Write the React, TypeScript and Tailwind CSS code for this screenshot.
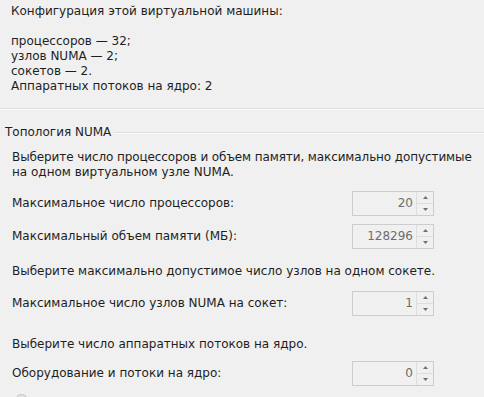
import React from "react";

type SpinProps = { value: string };

const SpinBox: React.FC<SpinProps> = ({ value }) => {
  return (
    <div className="flex h-[25px] w-[82px] border border-[#cdcdcd] bg-[#f0f0f0]">
      <div className="flex flex-1 items-center justify-end pr-[3px] text-[#6d6d6d]">
        {value}
      </div>
      <div className="flex w-[17px] flex-col border-l border-[#dedede]">
        <div className="flex flex-1 items-center justify-center border-b border-[#dedede]">
          <svg width="5" height="3" viewBox="0 0 5 3">
            <path d="M2.5 0 L5 3 L0 3 Z" fill="#6f6f6f" />
          </svg>
        </div>
        <div className="flex flex-1 items-center justify-center">
          <svg width="5" height="3" viewBox="0 0 5 3">
            <path d="M0 0 L5 0 L2.5 3 Z" fill="#6f6f6f" />
          </svg>
        </div>
      </div>
    </div>
  );
};

const Row: React.FC<{ label: string; value: string }> = ({ label, value }) => (
  <div className="flex items-center justify-between pr-[38px]">
    <span>{label}</span>
    <SpinBox value={value} />
  </div>
);

const App: React.FC = () => {
  return (
    <div
      className="h-[397px] w-[484px] overflow-hidden bg-[#f0f0f0] text-[12px] leading-[15px] text-[#1e1e1e] whitespace-nowrap"
      style={{ fontFamily: '"DejaVu Sans", Tahoma, sans-serif' }}
    >
      <div className="px-[11px] pt-[4px]">
        <p>Конфигурация этой виртуальной машины:</p>
        <p className="mt-[15px]">процессоров — 32;</p>
        <p>узлов NUMA — 2;</p>
        <p>сокетов — 2.</p>
        <p>Аппаратных потоков на ядро: 2</p>
      </div>

      <div className="mt-[14px] border-t border-b border-t-[#dfdfdf] border-b-[#fafafa]" />

      <div className="mt-[15px]">
        <div className="flex items-center">
          <span className="pl-[5px] pr-[3px]">Топология NUMA</span>
          <div className="flex-1 border-t border-b border-t-[#dfdfdf] border-b-[#fafafa]" />
        </div>

        <div className="px-[12px]">
          <p className="mt-[10px] tracking-[-0.1px]">
            Выберите число процессоров и объем памяти, максимально допустимые
          </p>
          <p>на одном виртуальном узле NUMA.</p>

          <div className="mt-[11px] flex flex-col gap-[8px]">
            <Row label="Максимальное число процессоров:" value="20" />
            <Row label="Максимальный объем памяти (МБ):" value="128296" />
          </div>

          <p className="mt-[15px]">
            Выберите максимально допустимое число узлов на одном сокете.
          </p>
          <div className="mt-[12px]">
            <Row label="Максимальное число узлов NUMA на сокет:" value="1" />
          </div>

          <p className="mt-[21px]">Выберите число аппаратных потоков на ядро.</p>
          <div className="mt-[9px]">
            <Row label="Оборудование и потоки на ядро:" value="0" />
          </div>

          <div className="mt-[8px] flex items-center">
            <div className="ml-[3px] h-[13px] w-[13px] rounded-full border border-[#c4c4c4] bg-[#e2e2e2]" />
          </div>
        </div>
      </div>
    </div>
  );
};

export default App;
